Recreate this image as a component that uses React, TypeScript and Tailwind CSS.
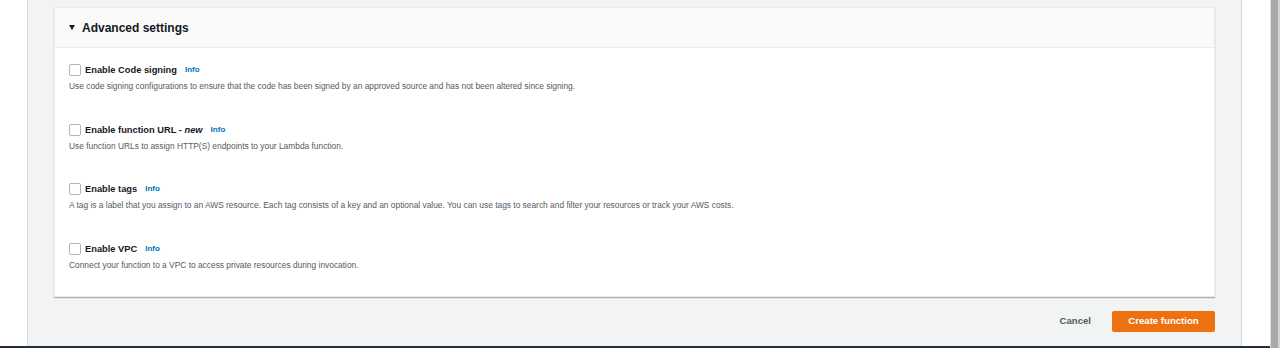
import React from "react";

const font = { fontFamily: '"Liberation Sans", Arial, sans-serif' };

type Setting = { label: React.ReactNode; desc: string };

const settings: Setting[] = [
  {
    label: "Enable Code signing",
    desc: "Use code signing configurations to ensure that the code has been signed by an approved source and has not been altered since signing.",
  },
  {
    label: (
      <>
        Enable function URL - <i>new</i>
      </>
    ),
    desc: "Use function URLs to assign HTTP(S) endpoints to your Lambda function.",
  },
  {
    label: "Enable tags",
    desc: "A tag is a label that you assign to an AWS resource. Each tag consists of a key and an optional value. You can use tags to search and filter your resources or track your AWS costs.",
  },
  {
    label: "Enable VPC",
    desc: "Connect your function to a VPC to access private resources during invocation.",
  },
];

function SettingRow({ label, desc }: Setting) {
  return (
    <div className="flex flex-col">
      <label className="flex items-center h-[12px]">
        <span className="w-[12px] h-[12px] rounded-[2px] border border-[#aab7b8] bg-white shrink-0" />
        <span className="ml-[4px] text-[9.3px] font-bold text-[#16191f] leading-[12px]">
          {label}
        </span>
        <a className="ml-[8px] text-[8px] font-bold text-[#0073bb] leading-[12px]">
          Info
        </a>
      </label>
      <p className="mt-[4px] text-[8.4px] text-[#545b64] leading-[12px]">
        {desc}
      </p>
    </div>
  );
}

export default function App() {
  return (
    <div className="flex h-[348px] w-[1280px] bg-white overflow-hidden" style={font}>
      <div className="flex flex-col w-[1270px]">
        <div className="flex h-[346px]">
          <div className="w-[27px] bg-white" />
          <div className="w-[1215px] border-l border-r border-[#d5dbdb] bg-[#f2f3f3] px-[26px] pt-[7px] flex flex-col">
            <section className="bg-white border border-[#eaeded] shadow-[0_1px_1px_0_rgba(0,28,36,0.3)] h-[290px] flex flex-col">
              <div className="h-[40px] bg-[#fafafa] border-b border-[#eaeded] flex items-center px-[14px]">
                <span className="w-0 h-0 border-l-[3.5px] border-r-[3.5px] border-t-[5px] border-l-transparent border-r-transparent border-t-[#16191f]" />
                <span className="ml-[7px] text-[12px] font-bold text-[#16191f] leading-[16px]">
                  Advanced settings
                </span>
              </div>
              <div className="px-[14px] pt-[16px] flex flex-col gap-[31.6px]">
                {settings.map((s, i) => (
                  <SettingRow key={i} {...s} />
                ))}
              </div>
            </section>
            <div className="flex justify-end items-center mt-[14px] gap-[21px]">
              <button type="button" className="text-[9.6px] font-bold text-[#545b64]">
                Cancel
              </button>
              <button
                type="button"
                className="w-[103px] h-[21px] rounded-[2px] bg-[#ec7211] text-white text-[9.6px] font-bold"
              >
                Create function
              </button>
            </div>
          </div>
          <div className="flex-1 bg-white" />
        </div>
        <div className="h-[2px] bg-[#232f3e]" />
      </div>
      <div className="w-[10px] flex">
        <div className="w-[1px] bg-[#e0e0e0]" />
        <div className="w-[7px] bg-[#a8a8a8]" />
        <div className="flex-1 bg-[#d4d4d4]" />
      </div>
    </div>
  );
}
